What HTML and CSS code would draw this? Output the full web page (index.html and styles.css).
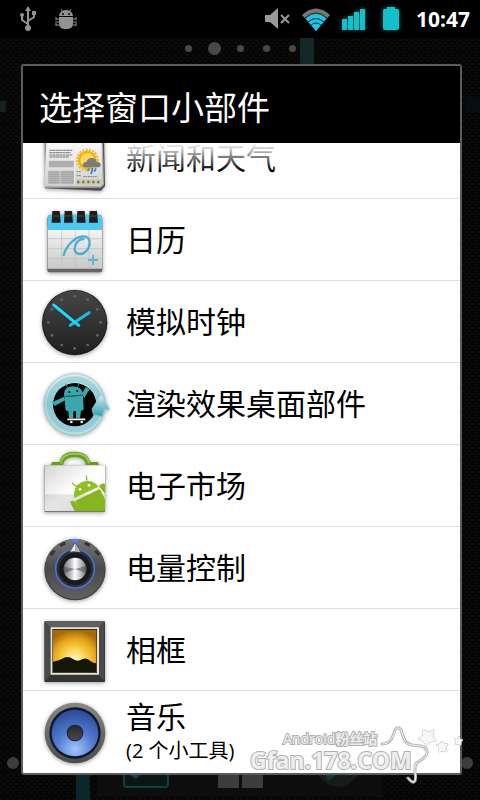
FILE: index.html
```html
<!DOCTYPE html>
<html lang="zh-CN">
<head>
    <meta charset="UTF-8">
    <meta name="viewport" content="width=device-width, initial-scale=1.0">
    <title>选择窗口小部件</title>
    <link rel="stylesheet" href="styles.css">
</head>
<body>
    <svg class="wallpaper" viewBox="0 0 480 800" preserveAspectRatio="xMidYMid slice" aria-hidden="true">
        <defs>
            <pattern id="mesh" width="6" height="6" patternUnits="userSpaceOnUse">
                <rect width="6" height="6" fill="#060606"/>
                <path d="M0 1h3M3 4h3" stroke="#0c0c0c" stroke-width="2"/>
            </pattern>
        </defs>
        <rect width="480" height="800" fill="url(#mesh)"/>
        <rect x="300" y="38" width="14" height="60" fill="#142828"/>
        <rect x="0" y="101" width="6" height="11" fill="#172020"/>
        <rect x="465" y="97" width="15" height="15" fill="#070d14"/>
        <rect x="76" y="760" width="14" height="40" fill="#0b2529"/>
        <circle cx="13" cy="763" r="6" fill="#3c3c3c"/>
        <circle cx="467" cy="763" r="6" fill="#3c3c3c"/>
    </svg>

    <header class="status-bar">
        <div class="notifications">
            <svg width="18" height="26" viewBox="0 0 18 26" fill="none" stroke="#929292" stroke-width="2">
                <path d="M8 21V4M8 18l-6-4V9M8 15l6-4V7"/>
                <path d="M8 0l3 5H5zM12 5h4v4h-4z" fill="#929292" stroke="none"/>
                <circle cx="2" cy="9" r="2" fill="#929292" stroke="none"/>
                <circle cx="8" cy="22" r="3" fill="#929292" stroke="none"/>
            </svg>
            <svg width="22" height="22" viewBox="0 0 22 22" fill="#929292">
                <path d="M4 8a7 6 0 0 1 14 0zM4 9h14v7a5 5 0 0 1-5 5H9a5 5 0 0 1-5-5z"/>
                <path d="M8 4L6 1M14 4l2-3M4 11H1M4 14H0M4 17H1M18 11h3M18 14h4M18 17h3M1 9v3M1 15v3M21 9v3M21 15v3" stroke="#929292" stroke-width="1" fill="none"/>
                <circle cx="8" cy="6" r="1" fill="#000"/>
                <circle cx="14" cy="6" r="1" fill="#000"/>
            </svg>
        </div>
        <div class="indicators">
            <svg width="26" height="24" viewBox="0 0 26 24">
                <path d="M1 8h5l8-7v21l-8-7H1z" fill="#999"/>
                <path d="M17 8l8 8M25 8l-8 8" stroke="#999" stroke-width="2"/>
            </svg>
            <svg width="30" height="24" viewBox="0 0 30 24">
                <path d="M1 8Q15-5 29 8L15 24z" fill="#777"/>
                <path d="M5 12Q15 2 25 12L15 24z" fill="#1fc4e4"/>
                <path d="M4 11Q15 1 26 11M7 15q8-7 16 0M10 18q5-4 10 0" fill="none" stroke="#06282f" stroke-width="1"/>
            </svg>
            <svg class="glow" width="24" height="24" viewBox="0 0 24 24" fill="#14bfca">
                <path d="M0 12h5v11H0zM6 9h5v14H6zM12 5h5v18h-5zM18 2h5v21h-5z"/>
            </svg>
            <svg class="glow battery" width="18" height="24" viewBox="0 0 18 24" fill="#14bfca">
                <path d="M5 0h8v2h3q1 0 1 2v17q0 2-2 2H3q-2 0-2-2V4q0-2 1-2h3z"/>
            </svg>
            <time class="clock">10:47</time>
        </div>
    </header>

    <div class="page-dots" aria-hidden="true">
        <i></i><i class="current"></i><i></i><i></i><i></i>
    </div>

    <main class="dialog" role="dialog" aria-labelledby="dialog-title">
        <h1 class="dialog-title" id="dialog-title">选择窗口小部件</h1>
        <ul class="widget-list">
            <li>
                <button class="widget" type="button">
                    <svg class="icon" viewBox="57 -42 216 216">
                        <defs>
                            <linearGradient id="paper" x2="0" y2="1">
                                <stop offset="0" stop-color="#fff"/>
                                <stop offset="1" stop-color="#cfcfcf"/>
                            </linearGradient>
                        </defs>
                        <path d="M74 0h178l3 150-12 14-168-7z" fill="#4f4f4f"/>
                        <path d="M76 0h172l4 146-10 9H75z" fill="#aaa"/>
                        <path d="M80 0h164l4 142-6 8H73z" fill="url(#paper)"/>
                        <path d="M88 43h70M88 50h64M88 57h70M88 63h60" stroke="#777" stroke-width="3" stroke-dasharray="9 1"/>
                        <path d="M87 74h74v20H87zM85 104h33v40H85zM122 104h40v40h-40z" fill="#b6b6b6"/>
                        <path d="M86 78h75M86 84h75M86 90h75M85 109h77M85 115h77M85 121h77M85 127h77M85 133h77M85 139h77" stroke="#999" stroke-width="2" stroke-dasharray="3 1"/>
                        <path d="M164 20v128" stroke="#eee" stroke-width="3"/>
                        <circle cx="202" cy="72" r="31" fill="none" stroke="#f4bd22" stroke-width="7" stroke-dasharray="6 4"/>
                        <circle cx="202" cy="72" r="28" fill="#edaf1b"/>
                        <circle cx="202" cy="72" r="21" fill="#ffd75a"/>
                        <path d="M194 94q-8-2-5-11 4-6 10-5 5-14 18-12 11 2 13 12 12 0 12 9 0 7-8 7z" fill="#7c7c7c"/>
                        <path d="M207 97l-4 8M218 96l-5 18M228 97l-5 10" stroke="#2e78df" stroke-width="5"/>
                        <path d="M170 107h14M170 119h14M190 122h42" stroke="#777" stroke-width="3" stroke-dasharray="5 2"/>
                        <path d="M167 130h78v15h-78z" fill="#c9c9a8"/>
                        <path d="M172 138h70" stroke="#6c6c52" stroke-width="8" stroke-dasharray="6 9"/>
                    </svg>
                    <span class="label">新闻和天气</span>
                </button>
            </li>
            <li>
                <button class="widget" type="button">
                    <svg class="icon" viewBox="27 12 216 216">
                        <defs>
                            <linearGradient id="page" x2="0" y2="1">
                                <stop offset="0" stop-color="#f6f6f6"/>
                                <stop offset="1" stop-color="#c9c9c9"/>
                            </linearGradient>
                        </defs>
                        <rect x="52" y="50" width="165" height="167" rx="6" fill="#656565"/>
                        <path d="M53 80h163v126H53z" fill="url(#page)"/>
                        <path d="M53 90V50q0-6 6-6h151q6 0 6 6v40z" fill="#50c7ef"/>
                        <path d="M95 90v116M136 90v116M177 90v116M53 116h163M53 146h163M53 176h163" stroke="#bdbdbd" stroke-width="2"/>
                        <path d="M67 33h22l3 35H65zM104 33h22l3 35h-27zM142 33h22l3 35h-27zM179 33h22l3 35h-27z" fill="#1d1d1d"/>
                        <path d="M68 48h20M105 48h20M143 48h20M180 48h20" stroke="#4b4b4b" stroke-width="3"/>
                        <path d="M101 165c8-26 32-55 58-56 26-1 24 30 8 46-12 12-34 8-33-10 1-16 14-29 26-28" fill="none" stroke="#4baed0" stroke-width="7" stroke-linecap="round"/>
                        <path d="M189 164v31M174 180h30" stroke="#58b9da" stroke-width="6"/>
                    </svg>
                    <span class="label">日历</span>
                </button>
            </li>
            <li>
                <button class="widget" type="button">
                    <svg class="icon" viewBox="27 12 216 216">
                        <defs>
                            <linearGradient id="face" x2="0" y2="1">
                                <stop offset="0" stop-color="#464646"/>
                                <stop offset="1" stop-color="#202020"/>
                            </linearGradient>
                        </defs>
                        <circle cx="134" cy="122" r="98" fill="#1a1a1a"/>
                        <circle cx="134" cy="121" r="95" fill="url(#face)"/>
                        <g fill="#666">
                            <circle cx="134" cy="43" r="4"/><circle cx="173" cy="53" r="4"/><circle cx="202" cy="82" r="4"/>
                            <circle cx="212" cy="121" r="4"/><circle cx="202" cy="160" r="4"/><circle cx="173" cy="189" r="4"/>
                            <circle cx="134" cy="199" r="4"/><circle cx="95" cy="189" r="4"/><circle cx="66" cy="160" r="4"/>
                            <circle cx="55" cy="121" r="4"/><circle cx="66" cy="82" r="4"/><circle cx="95" cy="53" r="4"/>
                        </g>
                        <path d="M121 130l56-38" stroke="#16bfe6" stroke-width="9" stroke-linecap="round"/>
                        <path d="M146 130L71 69" stroke="#1fd5f8" stroke-width="9" stroke-linecap="round"/>
                    </svg>
                    <span class="label">模拟时钟</span>
                </button>
            </li>
            <li>
                <button class="widget" type="button">
                    <svg class="icon" viewBox="27 12 216 216">
                        <defs>
                            <linearGradient id="ring" x2="0" y2="1">
                                <stop offset="0" stop-color="#d9f0f3"/>
                                <stop offset="0.5" stop-color="#9fd3db"/>
                                <stop offset="1" stop-color="#b8e2e8"/>
                            </linearGradient>
                            <linearGradient id="arrow" x2="0" y2="1">
                                <stop offset="0" stop-color="#d9f1f4"/>
                                <stop offset="1" stop-color="#2f9fab"/>
                            </linearGradient>
                        </defs>
                        <circle cx="134" cy="121" r="92" fill="url(#ring)" stroke="#9bbfc5" stroke-width="2"/>
                        <circle cx="134" cy="121" r="75" fill="none" stroke="#73b9c3" stroke-width="18" opacity="0.45"/>
                        <circle cx="134" cy="122" r="65" fill="#000"/>
                        <path d="M186 135l28-46 24 48-14-3-8 24-26-6z" fill="url(#arrow)" stroke="#92c8d0" stroke-width="2"/>
                        <g fill="#3aa7ad">
                            <path d="M102 91q0-22 26-24 26 0 30 20l-2 8-53 4z"/>
                            <path d="M104 99l55-4 2 39q0 6-8 6l-3 22h-12v-20h-8v20h-13l-2-20q-8 0-9-7z"/>
                            <path d="M112 70l-6-12M143 68l5-10" stroke="#3aa7ad" stroke-width="3"/>
                            <path d="M102 98l4 11-32 17-8-11zM155 91l12-22 12 7-16 25z"/>
                        </g>
                        <circle cx="118" cy="84" r="3"/><circle cx="142" cy="81" r="3"/>
                        <path d="M106 97l52-4" stroke="#063f43" stroke-width="2"/>
                        <path d="M114 166h50" stroke="#fff" stroke-width="5" stroke-linecap="round"/>
                        <circle cx="124" cy="174" r="4" fill="#eee"/><circle cx="155" cy="174" r="4" fill="#eee"/>
                    </svg>
                    <span class="label">渲染效果桌面部件</span>
                </button>
            </li>
            <li>
                <button class="widget" type="button">
                    <svg class="icon" viewBox="27 12 216 216">
                        <defs>
                            <linearGradient id="bag" x2="1" y2="1">
                                <stop offset="0" stop-color="#d5d5d5"/>
                                <stop offset="0.5" stop-color="#fff"/>
                                <stop offset="1" stop-color="#eee"/>
                            </linearGradient>
                            <clipPath id="bag-edge"><path d="M44 58h181v137H44z"/></clipPath>
                        </defs>
                        <path d="M62 60l4-12h23c3-22 20-31 45-31s43 10 46 31h24l4 12h-40c0-19-15-27-34-27s-34 8-35 27z" fill="#659f1b"/>
                        <path d="M93 52c2-22 18-29 41-29s40 8 42 29" fill="none" stroke="#a1ca54" stroke-width="5"/>
                        <path d="M43 58h183l-1 140H44z" fill="#777"/>
                        <path d="M44 58h181v137H44z" fill="url(#bag)"/>
                        <path d="M44 145h181v50H44z" fill="#000" opacity="0.1"/>
                        <g clip-path="url(#bag-edge)">
                            <path d="M133 156q-6-35 23-48 32-10 50 14z" fill="#8fbf25"/>
                            <path d="M135 165l74-36 36 67H152z" fill="#86b61d"/>
                            <path d="M120 168q10-8 17 2l18 29h-19zM207 121q6-12 20-7v32z" fill="#86b61d"/>
                            <path d="M141 123l-15-12M171 104l-2-15" stroke="#8fbf25" stroke-width="4"/>
                            <circle cx="150" cy="130" r="4" fill="#fff"/><circle cx="177" cy="118" r="4" fill="#fff"/>
                        </g>
                    </svg>
                    <span class="label">电子市场</span>
                </button>
            </li>
            <li>
                <button class="widget" type="button">
                    <svg class="icon" viewBox="27 6 216 216">
                        <defs>
                            <linearGradient id="dial" x2="0" y2="1">
                                <stop offset="0" stop-color="#777"/>
                                <stop offset="0.5" stop-color="#494949"/>
                                <stop offset="1" stop-color="#606060"/>
                            </linearGradient>
                            <linearGradient id="metal" x2="1" y2="0">
                                <stop offset="0" stop-color="#777"/>
                                <stop offset="0.3" stop-color="#bbb"/>
                                <stop offset="0.5" stop-color="#fff"/>
                                <stop offset="0.7" stop-color="#ccc"/>
                                <stop offset="1" stop-color="#777"/>
                            </linearGradient>
                        </defs>
                        <circle cx="135" cy="119" r="92" fill="#3b3b3b"/>
                        <circle cx="135" cy="117" r="90" fill="url(#dial)"/>
                        <path d="M62 75l12-13M90 47l16-8M164 39l16 8M196 62l12 13" stroke="#343434" stroke-width="9"/>
                        <path d="M122 28q13-4 27 0l-7 10h-13z" fill="#4d83ee"/>
                        <circle cx="135" cy="116" r="58" fill="#303030" stroke="#456fda" stroke-width="5"/>
                        <circle cx="135" cy="117" r="48" fill="#191919"/>
                        <circle cx="135" cy="117" r="34" fill="url(#metal)"/>
                        <path d="M135 117L102 110q-2 10 2 20zM135 117l33-9q3 12-1 21z" fill="#444" opacity="0.5"/>
                        <path d="M135 38l17 29q-17-5-33 0z" fill="#e8e8e8" stroke="#444" stroke-width="2"/>
                        <path d="M135 42v23l13 1z" fill="#aaa"/>
                    </svg>
                    <span class="label">电量控制</span>
                </button>
            </li>
            <li>
                <button class="widget" type="button">
                    <svg class="icon" viewBox="27 12 216 216">
                        <defs>
                            <radialGradient id="sunset" cx="0.5" cy="0.7" r="0.7">
                                <stop offset="0" stop-color="#fffbd8"/>
                                <stop offset="0.35" stop-color="#ffd450"/>
                                <stop offset="0.7" stop-color="#e5a51c"/>
                                <stop offset="1" stop-color="#a56908"/>
                            </radialGradient>
                        </defs>
                        <rect x="43" y="34" width="182" height="182" rx="3" fill="#343434"/>
                        <path d="M45 36h178l-18 18H63z" fill="#606060"/>
                        <path d="M45 36l18 18v140l-18 18zM223 36l-18 18v140l18 18z" fill="#4a4a4a"/>
                        <path d="M62 52h145v142H62z" fill="#e5e5e5"/>
                        <path d="M67 57h134v132H67z" fill="#3c2a08"/>
                        <path d="M69 60h130v127H69z" fill="url(#sunset)"/>
                        <path d="M69 155q13-1 25-7 19-14 35-1 12 8 21 4 19-12 31 2 8 7 18 7v27H69z" fill="#141708"/>
                    </svg>
                    <span class="label">相框</span>
                </button>
            </li>
            <li>
                <button class="widget" type="button">
                    <svg class="icon" viewBox="27 12 216 216">
                        <defs>
                            <radialGradient id="cone" cx="0.5" cy="0.85" r="0.8">
                                <stop offset="0" stop-color="#a2c6ff"/>
                                <stop offset="0.5" stop-color="#527bd0"/>
                                <stop offset="1" stop-color="#2d4e9c"/>
                            </radialGradient>
                            <linearGradient id="rim" x2="0" y2="1">
                                <stop offset="0" stop-color="#898884"/>
                                <stop offset="1" stop-color="#4b4b49"/>
                            </linearGradient>
                            <linearGradient id="cap" x2="0" y2="1">
                                <stop offset="0" stop-color="#292929"/>
                                <stop offset="1" stop-color="#4a4a4a"/>
                            </linearGradient>
                        </defs>
                        <circle cx="135" cy="123" r="91" fill="url(#rim)"/>
                        <circle cx="135" cy="123" r="77" fill="#10172b"/>
                        <circle cx="135" cy="123" r="70" fill="url(#cone)"/>
                        <circle cx="135" cy="123" r="25" fill="#182344"/>
                        <circle cx="135" cy="123" r="22" fill="url(#cap)"/>
                    </svg>
                    <span class="label">音乐<small>(2 个小工具)</small></span>
                </button>
            </li>
        </ul>
    </main>

    <footer class="dock" aria-hidden="true">
        <svg width="286" height="25" viewBox="97 775 286 25">
            <path d="M97 775h286v22H97z" fill="#0d0d0d"/>
            <path d="M124 775v9q0 3 3 3h38q3 0 3-3v-9" fill="#0a1515" stroke="#0d4045" stroke-width="2"/>
            <path d="M130 775h10l-4 4z" fill="#0d4a50"/>
            <path d="M218 775h21v13h-21zM242 775h21v13h-21z" fill="#3c3c3c"/>
            <path d="M318 775q20 24 40 0z" fill="#171b1b"/>
            <path d="M325 775h11l-7 6z" fill="#083b40"/>
        </svg>
    </footer>

    <div class="watermark">
        <span class="watermark-name">Android<b>粉丝站</b></span>
        <span class="watermark-site">Gfan.178.COM</span>
        <svg class="watermark-stars" width="84" height="60" viewBox="380 725 84 60" fill="none">
            <g stroke="#b4b4b4" stroke-width="3" stroke-linecap="round" stroke-linejoin="round">
                <path id="swirl" d="M382 744c8 0 10-5 12-11 2-7 6-7 8 0 2 7 4 11 10 12 8 1 16 1 15 8-1 6-8 7-11 11-3 6 1 11-1 17-2 3-5-1-7-3"/>
            </g>
            <use href="#swirl" stroke="#f8f8f8" stroke-width="1"/>
            <g fill="#f6f6f6" stroke="#bbb" stroke-width="1">
                <path d="M423 729l5 3 6-2-1 6 3 5-6 1-4 4-3-5-5-2 5-4z"/>
                <path d="M442 741l2 3 4 0-2 4 1 4-4-1-4 1 0-4-3-3 4-1z"/>
                <path d="M459 736l1 3 3 1-2 2 0 3-3-1-3 1 1-3-2-3 3 0z"/>
            </g>
        </svg>
    </div>
</body>
</html>
```
FILE: styles.css
```css
* {
    box-sizing: border-box;
}

body {
    margin: 0;
    height: 100vh;
    position: relative;
    overflow: hidden;
    display: flex;
    flex-direction: column;
    background: #060606;
    font-family: "Open Sans", "Noto Sans CJK SC", sans-serif;
}

svg {
    display: block;
    flex-shrink: 0;
}

.wallpaper {
    position: absolute;
    inset: 0;
    width: 100%;
    height: 100%;
    z-index: -1;
}

/* Status bar */
.status-bar {
    height: 38px;
    padding: 0 10px 0 20px;
    display: flex;
    align-items: center;
    justify-content: space-between;
    background: #000;
}

.notifications,
.indicators {
    display: flex;
    align-items: center;
}

.notifications {
    gap: 17px;
}

.indicators {
    gap: 11px;
}

.glow {
    filter: drop-shadow(0 0 2px #0b6870);
}

.battery,
.clock {
    margin-left: 5px;
}

.clock {
    color: #fff;
    font-size: 21px;
    font-weight: 700;
}

/* Home screen page markers */
.page-dots {
    height: 20px;
    margin-bottom: 6px;
    display: flex;
    align-items: center;
    justify-content: center;
}

.page-dots i {
    width: 26px;
    display: flex;
    justify-content: center;
}

.page-dots i::before {
    content: "";
    width: 7px;
    height: 7px;
    border-radius: 50%;
    background: #484848;
}

.page-dots .current::before {
    width: 13px;
    height: 13px;
}

/* Dialog */
.dialog {
    flex: 1;
    min-height: 0;
    margin: 0 18px 0 21px;
    border: 2px solid #5c5c5c;
    border-radius: 3px;
    display: flex;
    flex-direction: column;
    background: #fff;
}

.dialog-title {
    margin: 0;
    padding: 22px 16px 15px;
    background: #000;
    color: #fff;
    font-size: 33px;
    font-weight: 400;
    line-height: 40px;
}

/* Scrolled to its end, so the first row is cut off at the top */
.widget-list {
    flex: 1;
    min-height: 0;
    margin: 0;
    padding: 0;
    position: relative;
    overflow: hidden;
    display: flex;
    flex-direction: column;
    justify-content: flex-end;
    list-style: none;
}

.widget-list::before {
    content: "";
    position: absolute;
    top: 0;
    left: 0;
    right: 0;
    height: 28px;
    background: linear-gradient(#fff, rgba(255, 255, 255, 0));
    pointer-events: none;
}

.widget-list li {
    border-bottom: 1px solid #dedede;
}

.widget-list li:last-child {
    border-bottom: 0;
    padding-bottom: 1px;
}

.widget {
    width: 100%;
    padding: 5px 16px 4px;
    border: 0;
    display: flex;
    align-items: center;
    gap: 15px;
    background: none;
    color: #000;
    font-family: inherit;
    text-align: left;
}

.icon {
    width: 72px;
    height: 72px;
    filter: drop-shadow(0 1px 2px rgba(0, 0, 0, 0.4));
}

.label {
    font-size: 30px;
    line-height: 38px;
}

.label small {
    display: block;
    font-size: 20px;
    line-height: 30px;
}

/* Dock behind the dialog */
.dock {
    height: 25px;
    display: flex;
    justify-content: center;
}

.watermark {
    position: absolute;
    right: 16px;
    bottom: 15px;
    width: 214px;
    height: 60px;
    padding-top: 6px;
    display: flex;
    flex-direction: column;
    color: #eee;
    -webkit-text-stroke: 2px #b0b0b0;
    paint-order: stroke fill;
    pointer-events: none;
}

.watermark-name {
    padding-left: 33px;
    font-size: 14px;
    line-height: 16px;
}

.watermark-site {
    font-size: 23px;
    font-weight: 700;
    line-height: 26px;
}

.watermark-stars {
    position: absolute;
    top: 0;
    right: 0;
}
```
